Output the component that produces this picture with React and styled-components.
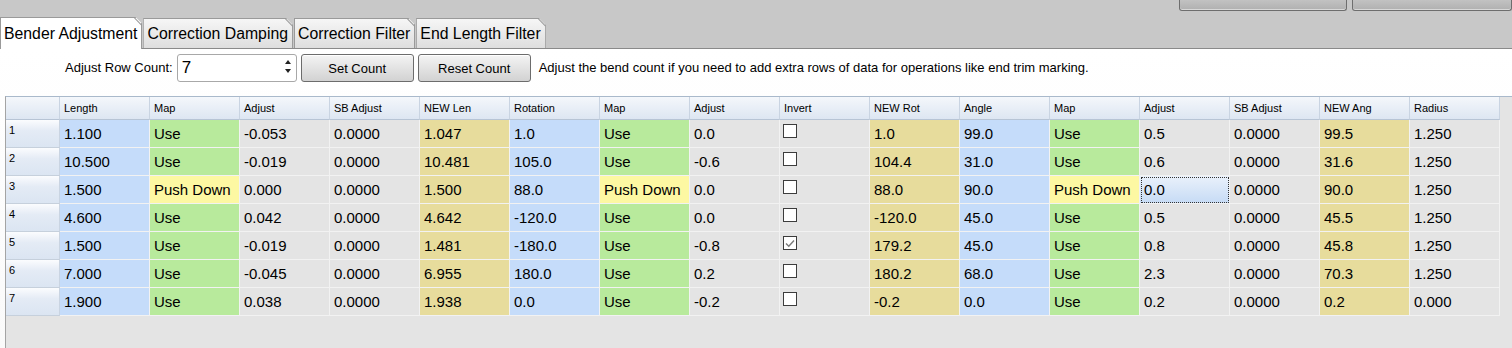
import styled, { createGlobalStyle } from "styled-components";

const GlobalStyle = createGlobalStyle`
  html, body {
    margin: 0;
    padding: 0;
    background: #c8c8c8;
    font-family: "Liberation Sans", Arial, sans-serif;
  }
  * { box-sizing: border-box; }
`;

const columns = [
  { title: "Length", kind: "blue" },
  { title: "Map", kind: "map" },
  { title: "Adjust", kind: "gray" },
  { title: "SB Adjust", kind: "gray" },
  { title: "NEW Len", kind: "tan" },
  { title: "Rotation", kind: "blue" },
  { title: "Map", kind: "map" },
  { title: "Adjust", kind: "gray" },
  { title: "Invert", kind: "check" },
  { title: "NEW Rot", kind: "tan" },
  { title: "Angle", kind: "blue" },
  { title: "Map", kind: "map" },
  { title: "Adjust", kind: "gray" },
  { title: "SB Adjust", kind: "gray" },
  { title: "NEW Ang", kind: "tan" },
  { title: "Radius", kind: "gray" },
];

const U = "Use";
const P = "Push Down";

const rows = [
  ["1.100", U, "-0.053", "0.0000", "1.047", "1.0", U, "0.0", false, "1.0", "99.0", U, "0.5", "0.0000", "99.5", "1.250"],
  ["10.500", U, "-0.019", "0.0000", "10.481", "105.0", U, "-0.6", false, "104.4", "31.0", U, "0.6", "0.0000", "31.6", "1.250"],
  ["1.500", P, "0.000", "0.0000", "1.500", "88.0", P, "0.0", false, "88.0", "90.0", P, "0.0", "0.0000", "90.0", "1.250"],
  ["4.600", U, "0.042", "0.0000", "4.642", "-120.0", U, "0.0", false, "-120.0", "45.0", U, "0.5", "0.0000", "45.5", "1.250"],
  ["1.500", U, "-0.019", "0.0000", "1.481", "-180.0", U, "-0.8", true, "179.2", "45.0", U, "0.8", "0.0000", "45.8", "1.250"],
  ["7.000", U, "-0.045", "0.0000", "6.955", "180.0", U, "0.2", false, "180.2", "68.0", U, "2.3", "0.0000", "70.3", "1.250"],
  ["1.900", U, "0.038", "0.0000", "1.938", "0.0", U, "-0.2", false, "-0.2", "0.0", U, "0.2", "0.0000", "0.2", "0.000"],
];

const fills = {
  blue: "#c5dcfa",
  green: "#b8ea9c",
  yellow: "#fdf8a2",
  tan: "#e7dc9c",
  gray: "transparent",
};

const Window = styled.div`
  width: 1512px;
  height: 348px;
  display: flex;
  flex-direction: column;
  overflow: hidden;
`;

const TopBar = styled.div`
  height: 48px;
  display: flex;
  justify-content: space-between;
  background: #c8c8c8;
`;

const TabStrip = styled.div`
  display: flex;
  align-items: flex-end;
  gap: 1px;
`;

const Tab = styled.div`
  position: relative;
  height: ${(p) => (p.$active ? "32px" : "30px")};
  margin-bottom: ${(p) => (p.$active ? "-1px" : "0")};
  padding: 0 4px 0 3px;
  display: flex;
  align-items: center;
  font-size: 15.8px;
  color: #000;
  background: ${(p) =>
    p.$active ? "#ffffff" : "linear-gradient(#f6f6f6, #dedede)"};
  border: 1px solid #9a9a9a;
  border-bottom: none;
  clip-path: polygon(0 0, calc(100% - 7px) 0, 100% 7px, 100% 100%, 0 100%);
  z-index: ${(p) => (p.$active ? 2 : 1)};

  &::after {
    content: "";
    position: absolute;
    top: 3px;
    right: -2px;
    width: 10px;
    height: 1px;
    background: #9a9a9a;
    transform: rotate(45deg);
  }
`;

const WinButtons = styled.div`
  display: flex;
  gap: 5px;
  align-items: flex-start;
`;

const WinButton = styled.div`
  width: ${(p) => p.$w}px;
  height: 11px;
  background: linear-gradient(#c2c2c2, #b0b0b0);
  border: 1px solid #6e6e6e;
  border-top: none;
  border-radius: 0 0 3px 3px;
  box-shadow: inset 0 -1px 0 #d8d8d8;
`;

const Panel = styled.div`
  flex: 1;
  display: flex;
  flex-direction: column;
  background: linear-gradient(#ffffff, #fafafa);
  border-top: 1px solid #8a8a8a;
  position: relative;
  z-index: 1;
`;

const Toolbar = styled.div`
  height: 47px;
  display: flex;
  align-items: flex-start;
  padding: 5px 0 0 65px;
  gap: 4px;
  font-size: 13px;
  color: #000;
`;

const Label = styled.span`
  line-height: 28px;
  margin-left: ${(p) => p.$ml || 0}px;
  white-space: nowrap;
`;

const SpinBox = styled.div`
  position: relative;
  width: 120px;
  height: 28px;
  border: 1px solid #a8a8a8;
  border-radius: 3px;
  background: #fff;
  font-size: 17px;
  line-height: 26px;
  padding-left: 4px;
`;

const Arrows = styled.div`
  position: absolute;
  right: 5px;
  top: 5px;
  display: flex;
  flex-direction: column;
  gap: 5px;
`;

const Arrow = styled.div`
  width: 0;
  height: 0;
  border-left: 3px solid transparent;
  border-right: 3px solid transparent;
  ${(p) =>
    p.$up ? "border-bottom: 4px solid #222;" : "border-top: 4px solid #222;"}
`;

const Button = styled.div`
  width: 113px;
  height: 28px;
  display: flex;
  align-items: center;
  justify-content: center;
  font-size: 13px;
  background: linear-gradient(#f4f4f4, #d2d2d2);
  border: 1px solid #6c6c6c;
  border-radius: 3px;
  box-shadow: inset 0 1px 0 #ffffff;
`;

const TableArea = styled.div`
  flex: 1;
  margin-left: 5px;
  background: #e4e4e4;
  border-left: 1px solid #a4a4a4;
  border-top: 1px solid #a9b9cb;
`;

const Row = styled.div`
  display: grid;
  grid-template-columns: 54px repeat(16, 90px);
`;

const HeadCell = styled.div`
  height: 23px;
  padding-left: 4px;
  display: flex;
  align-items: center;
  font-size: 11px;
  color: #000;
  background: linear-gradient(#f4f7fb, #dde6f2);
  border-right: 1px solid #c9d4e2;
  border-bottom: 1px solid #b7c4d5;
`;

const RowHead = styled.div`
  height: 28px;
  padding: 4px 0 0 3px;
  font-size: 11px;
  color: #000;
  background: linear-gradient(#fbfcfe 0%, #e4ebf5 40%, #dbe5f2 100%);
  border-right: 1px solid #c9d4e2;
  border-bottom: 1px solid #c6d0dc;
`;

const Cell = styled.div`
  height: 28px;
  padding-left: 4px;
  display: flex;
  align-items: center;
  font-size: 15px;
  color: #000;
  background: ${(p) => fills[p.$fill]};
  border-right: 1px solid #f2f2f2;
  border-bottom: 1px solid #f2f2f2;
`;

const SelectedCell = styled(Cell)`
  background: linear-gradient(#eaf1fb, #c6dbf5);
  outline: 1px dotted #333;
  outline-offset: -2px;
`;

const CheckCell = styled(Cell)`
  align-items: flex-start;
  padding: 4px 0 0 3px;
`;

const Box = styled.div`
  width: 14px;
  height: 14px;
  border: 1px solid #3c3c3c;
  background: #fff;
  display: flex;
  align-items: center;
  justify-content: center;
`;

const CheckBox = ({ checked }) => (
  <Box>
    {checked && (
      <svg width="10" height="9" viewBox="0 0 10 9">
        <path d="M1 4.5 L3.8 7.2 L9 1.5" fill="none" stroke="#7a7a7a" strokeWidth="1.4" />
      </svg>
    )}
  </Box>
);

const renderCell = (value, r, c) => {
  const kind = columns[c].kind;
  if (kind === "check") {
    return (
      <CheckCell key={c} $fill="gray">
        <CheckBox checked={value} />
      </CheckCell>
    );
  }
  if (r === 2 && c === 12) {
    return (
      <SelectedCell key={c} $fill="gray">
        {value}
      </SelectedCell>
    );
  }
  let fill = kind;
  if (kind === "map") fill = value === P ? "yellow" : "green";
  return (
    <Cell key={c} $fill={fill}>
      {value}
    </Cell>
  );
};

const App = () => {
  const tabs = ["Bender Adjustment", "Correction Damping", "Correction Filter", "End Length Filter"];

  return (
    <Window>
      <GlobalStyle />
      <TopBar>
        <TabStrip>
          {tabs.map((t, i) => (
            <Tab key={t} $active={i === 0}>
              {t}
            </Tab>
          ))}
        </TabStrip>
        <WinButtons>
          <WinButton $w={168} />
          <WinButton $w={160} />
        </WinButtons>
      </TopBar>
      <Panel>
        <Toolbar>
          <Label>Adjust Row Count:</Label>
          <SpinBox>
            7
            <Arrows>
              <Arrow $up />
              <Arrow />
            </Arrows>
          </SpinBox>
          <Button>Set Count</Button>
          <Button>Reset Count</Button>
          <Label $ml={4}>
            Adjust the bend count if you need to add extra rows of data for operations like end trim marking.
          </Label>
        </Toolbar>
        <TableArea>
          <Row>
            <HeadCell />
            {columns.map((col, i) => (
              <HeadCell key={i}>{col.title}</HeadCell>
            ))}
          </Row>
          {rows.map((row, r) => (
            <Row key={r}>
              <RowHead>{r + 1}</RowHead>
              {row.map((v, c) => renderCell(v, r, c))}
            </Row>
          ))}
        </TableArea>
      </Panel>
    </Window>
  );
};

export default App;
